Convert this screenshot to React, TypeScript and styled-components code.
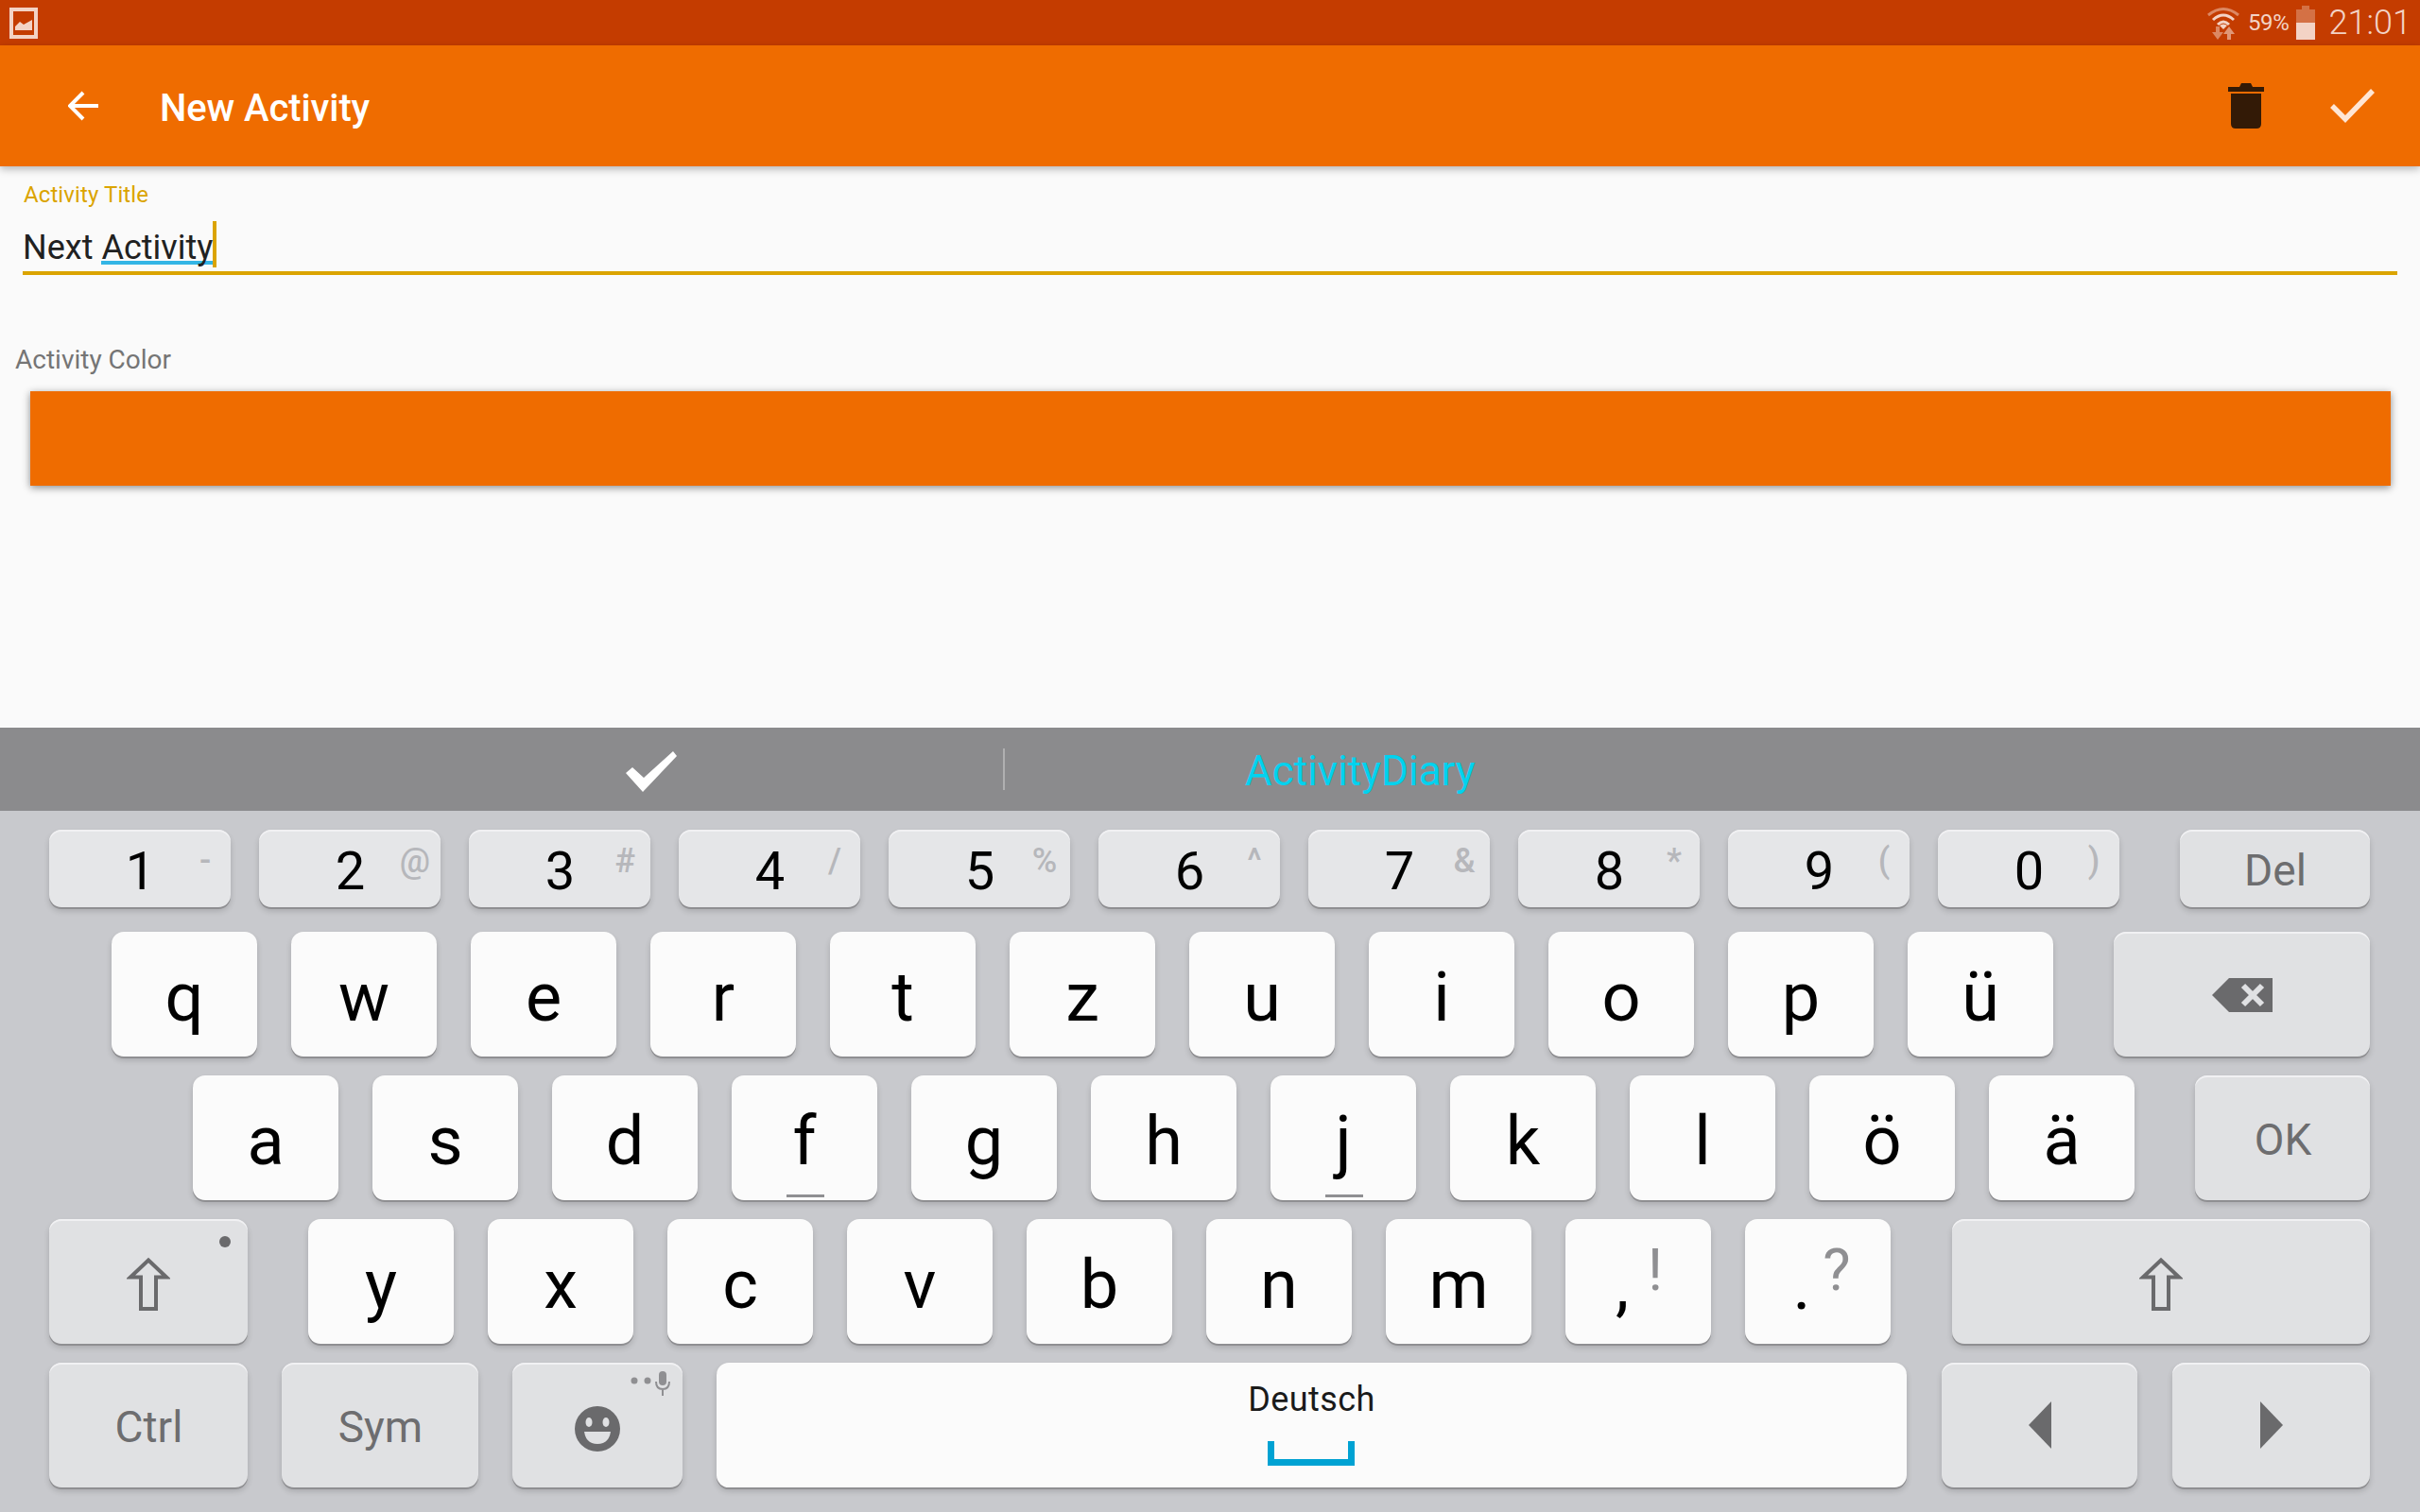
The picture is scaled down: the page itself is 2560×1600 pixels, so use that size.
import React from "react";
import styled, { createGlobalStyle } from "styled-components";

const Global = createGlobalStyle`
  html, body { margin: 0; padding: 0; background: #fafafa; }
  * { box-sizing: border-box; }
`;

const Page = styled.div`
  width: 2560px;
  height: 1600px;
  display: flex;
  flex-direction: column;
  overflow: hidden;
  font-family: Roboto, "Liberation Sans", sans-serif;
  background: #fafafa;
`;

const StatusBar = styled.div`
  height: 48px;
  flex: none;
  background: #c43c00;
  display: flex;
  align-items: center;
  padding: 0 9px 0 10px;
`;
const StatusLeft = styled.div`
  flex: 1;
  display: flex;
  align-items: center;
`;
const Percent = styled.span`
  font-size: 24px;
  color: #f3d3c5;
  margin-left: 9px;
  margin-right: 7px;
  letter-spacing: -0.3px;
`;
const Clock = styled.span`
  font-size: 36px;
  font-weight: 300;
  color: #f3d3c5;
  margin-left: 15px;
`;

const Toolbar = styled.div`
  height: 128px;
  flex: none;
  background: #ef6c00;
  display: flex;
  align-items: center;
  padding: 0 48px 0 72px;
  box-shadow: 0 3px 8px rgba(0, 0, 0, 0.28);
  position: relative;
  z-index: 2;
`;
const Title = styled.div`
  flex: 1;
  margin-left: 65px;
  font-size: 40px;
  font-weight: 500;
  letter-spacing: -0.1px;
  color: #fff;
  padding-top: 4px;
`;
const ToolIcon = styled.svg<{ $mr?: number }>`
  display: block;
  flex: none;
  margin-right: ${(p) => p.$mr ?? 0}px;
`;

const Content = styled.div`
  flex: 1;
  display: flex;
  flex-direction: column;
  padding: 16px 24px 0 24px;
  background: #fafafa;
`;
const FloatLabel = styled.div`
  font-size: 24px;
  line-height: 28px;
  letter-spacing: 0.1px;
  color: #dba400;
  margin-left: 1px;
`;
const InputRow = styled.div`
  height: 71px;
  border-bottom: 4px solid #dba400;
  font-size: 36px;
  line-height: 42px;
  color: #212121;
  padding: 21px 0 0 0;
  display: flex;
`;
const ComposingWord = styled.span`
  position: relative;
  margin-left: 9px;
  &::after {
    content: "";
    position: absolute;
    left: 0;
    right: 0;
    top: 35px;
    height: 4px;
    background: #33b5e5;
    z-index: 0;
  }
`;
const WordText = styled.span`
  position: relative;
  z-index: 1;
`;
const Caret = styled.span`
  display: block;
  width: 4px;
  height: 49px;
  margin-top: -7px;
  background: #dba400;
`;
const ColorLabel = styled.div`
  font-size: 28px;
  line-height: 32px;
  color: #757575;
  margin: 74px 0 0 -8px;
`;
const ColorSwatch = styled.div`
  height: 100px;
  margin: 17px 7px 0 8px;
  background: #ef6c00;
  box-shadow: 0 2px 8px rgba(0, 0, 0, 0.45);
`;

const Strip = styled.div`
  height: 88px;
  flex: none;
  background: #8b8b8d;
  display: flex;
  align-items: center;
`;
const StripLeft = styled.div`
  width: 1063px;
  height: 44px;
  padding-left: 662px;
  display: flex;
  align-items: center;
  border-right: 2px solid #b0b0b1;
`;
const StripCheck = styled.svg`
  display: block;
  margin-top: 5px;
`;
const Suggestion = styled.div`
  margin-left: 254px;
  padding-top: 4px;
  font-size: 44px;
  color: #00d2ef;
`;

const Keyboard = styled.div`
  height: 742px;
  flex: none;
  background: #c8c9cd;
  padding: 20px 53px 0 52px;
  display: flex;
  flex-direction: column;
`;
const KeyRow = styled.div<{ $indent?: number; $h: number; $top?: number }>`
  display: flex;
  height: ${(p) => p.$h}px;
  margin-top: ${(p) => p.$top ?? 20}px;
  padding-left: ${(p) => p.$indent ?? 0}px;
  &:first-child { margin-top: 0; }
`;
const Key = styled.div<{ $w: number; $gap?: number; $fn?: boolean; $num?: boolean }>`
  position: relative;
  flex: none;
  width: ${(p) => p.$w}px;
  margin-right: ${(p) => p.$gap ?? 36}px;
  height: 100%;
  border-radius: 13px;
  background: ${(p) => (p.$num ? "#e5e6e8" : p.$fn ? "#e0e1e3" : "#fbfbfb")};
  box-shadow: 0 2px 0 #8f8f92, 0 4px 6px rgba(0, 0, 0, 0.16)
    ${(p) => (p.$fn || p.$num ? ", inset 0 2px 0 #f1f1f3" : "")};
  display: flex;
  align-items: center;
  justify-content: center;
  &:last-child { margin-right: 0; }
`;
const Letter = styled.span`
  font-size: 72px;
  line-height: 72px;
  color: #000;
  padding-top: 7px;
`;
const Digit = styled.span`
  font-size: 56px;
  line-height: 56px;
  color: #000;
  padding: 6px 0 0 1px;
`;
const Hint = styled.span`
  position: absolute;
  left: 165px;
  top: 11px;
  width: 0;
  display: flex;
  justify-content: center;
  font-size: 36px;
  font-weight: 500;
  line-height: 44px;
  color: #b6b7bb;
`;
const FnLabel = styled.span`
  font-size: 46px;
  line-height: 50px;
  color: #6d6d6f;
  padding: 3px 0 0 1px;
`;
const Underscore = styled.span`
  position: absolute;
  left: 58px;
  bottom: 3px;
  width: 40px;
  height: 3px;
  background: #8f8f92;
`;
const PunctMain = styled.span<{ $x: number }>`
  position: absolute;
  left: ${(p) => p.$x}px;
  top: 26px;
  width: 0;
  display: flex;
  justify-content: center;
  font-size: 72px;
  line-height: 90px;
  color: #000;
`;
const PunctAlt = styled.span<{ $x: number }>`
  position: absolute;
  left: ${(p) => p.$x}px;
  top: 18px;
  width: 0;
  display: flex;
  justify-content: center;
  font-size: 62px;
  line-height: 72px;
  color: #8f8f92;
`;
const ShiftDot = styled.span`
  position: absolute;
  right: 18px;
  top: 18px;
  width: 12px;
  height: 12px;
  border-radius: 50%;
  background: #6a6a6c;
`;
const ShiftGlyph = styled.svg`
  display: block;
  margin-top: 4px;
`;
const BackGlyph = styled.svg`
  display: block;
  margin-top: 2px;
`;
const Smiley = styled.svg`
  display: block;
  margin-top: 8px;
`;
const MicBadge = styled.svg`
  position: absolute;
  right: 9px;
  top: 9px;
  display: block;
`;
const SpaceInner = styled.div`
  display: flex;
  flex-direction: column;
  align-items: center;
  padding-bottom: 5px;
`;
const SpaceLabel = styled.span`
  font-size: 36px;
  line-height: 42px;
  color: #1a1a1a;
  letter-spacing: 0.4px;
`;
const SpaceBracket = styled.span`
  display: block;
  width: 92px;
  height: 26px;
  margin-top: 23px;
  border: 7px solid #00a2d3;
  border-top: 0;
`;

const ShiftIcon = () => (
  <ShiftGlyph width="46" height="57" viewBox="0 0 46 57">
    <path d="M23 3.5 L42 21.5 H31 V55 H15 V21.5 H4 Z" fill="none" stroke="#6a6a6c" strokeWidth="4" />
  </ShiftGlyph>
);

const row2 = ["q", "w", "e", "r", "t", "z", "u", "i", "o", "p", "ü"];
const row3 = ["a", "s", "d", "f", "g", "h", "j", "k", "l", "ö", "ä"];
const row4 = ["y", "x", "c", "v", "b", "n", "m"];
const nums: [string, string][] = [
  ["1", "-"], ["2", "@"], ["3", "#"], ["4", "/"], ["5", "%"],
  ["6", "^"], ["7", "&"], ["8", "*"], ["9", "("], ["0", ")"],
];

export default function App() {
  return (
    <Page>
      <Global />
      <StatusBar>
        <StatusLeft>
          <svg width="30" height="33" viewBox="0 0 30 33">
            <path fillRule="evenodd" d="M0 0H30V33H0Z M4 4V29H26V4Z" fill="#f3d3c5" />
            <path d="M6 24 V20 L11 15 L15 18 L24 13 V24 Z" fill="#f3d3c5" />
          </svg>
        </StatusLeft>
        <svg width="34" height="36" viewBox="0 0 34 36">
          <g fill="none" stroke="#f3d3c5" strokeWidth="3">
            <path d="M1 10 Q17 -3 33 10" opacity="0.5" />
            <path d="M6 15 Q17 5 28 15" />
            <path d="M11 20 Q17 14 23 20" />
          </g>
          <path d="M17 25 L13 21 Q17 18 21 21 Z" fill="#f3d3c5" />
          <path d="M11 36 L5 28 H9 V22 H13 V28 H17 Z" fill="#f3d3c5" opacity="0.5" />
          <path d="M23 22 L29 30 H25 V36 H21 V30 H17 Z" fill="#f3d3c5" opacity="0.6" />
        </svg>
        <Percent>59%</Percent>
        <svg width="20" height="36" viewBox="0 0 20 36">
          <path d="M6 0H14V4H20V18H0V4H6Z" fill="#f3d3c5" opacity="0.35" />
          <rect y="18" width="20" height="18" fill="#f3d3c5" />
        </svg>
        <Clock>21:01</Clock>
      </StatusBar>

      <Toolbar>
        <svg width="32" height="32" viewBox="0 0 32 32">
          <path d="M32 16H3M16 2 2 16 16 30" fill="none" stroke="#fff" strokeWidth="4" />
        </svg>
        <Title>New Activity</Title>
        <ToolIcon $mr={70} width="38" height="48" viewBox="0 0 38 48">
          <path d="M0 4H12L14 0H24L26 4H38V9H0ZM3 11H35V43Q35 48 30 48H8Q3 48 3 43Z" fill="#331a06" />
        </ToolIcon>
        <ToolIcon width="47" height="36" viewBox="0 0 47 36">
          <path d="M2 18 16 32 45 2" fill="none" stroke="#ffe6d4" strokeWidth="5.5" />
        </ToolIcon>
      </Toolbar>

      <Content>
        <FloatLabel>Activity Title</FloatLabel>
        <InputRow>
          <span>Next</span>
          <ComposingWord><WordText>Activity</WordText></ComposingWord>
          <Caret />
        </InputRow>
        <ColorLabel>Activity Color</ColorLabel>
        <ColorSwatch />
      </Content>

      <Strip>
        <StripLeft>
          <StripCheck width="54" height="43" viewBox="0 0 54 43">
            <path d="M0 23 L7 17 L19 28 L50 0 L54 5 L18 43 Z" fill="#fff" />
          </StripCheck>
        </StripLeft>
        <Suggestion>ActivityDiary</Suggestion>
      </Strip>

      <Keyboard>
        <KeyRow $h={82}>
          {nums.map(([d, h], i) => (
            <Key key={d} $w={192} $gap={i === 9 ? 64 : 30} $num>
              <Digit>{d}</Digit>
              <Hint>{h}</Hint>
            </Key>
          ))}
          <Key $w={201} $fn><FnLabel>Del</FnLabel></Key>
        </KeyRow>

        <KeyRow $h={132} $top={26} $indent={66}>
          {row2.map((c, i) => (
            <Key key={c} $w={154} $gap={i === 10 ? 64 : 36}><Letter>{c}</Letter></Key>
          ))}
          <Key $w={271} $fn>
            <BackGlyph width="64" height="36" viewBox="0 0 64 36">
              <path d="M18 0H64V36H18L0 18Z" fill="#6a6a6c" />
              <path d="M33 8 53 28M53 8 33 28" stroke="#e0e1e3" strokeWidth="6" />
            </BackGlyph>
          </Key>
        </KeyRow>

        <KeyRow $h={132} $indent={152}>
          {row3.map((c, i) => (
            <Key key={c} $w={154} $gap={i === 10 ? 64 : 36}>
              <Letter>{c}</Letter>
              {(c === "f" || c === "j") && <Underscore />}
            </Key>
          ))}
          <Key $w={185} $fn><FnLabel>OK</FnLabel></Key>
        </KeyRow>

        <KeyRow $h={132}>
          <Key $w={210} $gap={64} $fn>
            <ShiftIcon />
            <ShiftDot />
          </Key>
          {row4.map((c) => (
            <Key key={c} $w={154}><Letter>{c}</Letter></Key>
          ))}
          <Key $w={154}>
            <PunctMain $x={60}>,</PunctMain>
            <PunctAlt $x={95}>!</PunctAlt>
          </Key>
          <Key $w={154} $gap={65}>
            <PunctMain $x={60}>.</PunctMain>
            <PunctAlt $x={97}>?</PunctAlt>
          </Key>
          <Key $w={442} $fn><ShiftIcon /></Key>
        </KeyRow>

        <KeyRow $h={132}>
          <Key $w={210} $fn><FnLabel>Ctrl</FnLabel></Key>
          <Key $w={208} $fn><FnLabel>Sym</FnLabel></Key>
          <Key $w={180} $fn>
            <Smiley width="48" height="48" viewBox="0 0 48 48">
              <circle cx="24" cy="24" r="24" fill="#6a6a6c" />
              <ellipse cx="15" cy="17" rx="3.5" ry="5" fill="#e0e1e3" />
              <ellipse cx="33" cy="17" rx="3.5" ry="5" fill="#e0e1e3" />
              <path d="M10 27H38Q36 40 24 40T10 27Z" fill="#e0e1e3" />
            </Smiley>
            <MicBadge width="46" height="26" viewBox="0 0 46 26">
              <circle cx="4" cy="10" r="3.5" fill="#8f8f92" />
              <circle cx="18" cy="10" r="3.5" fill="#8f8f92" />
              <rect x="30" y="0" width="8" height="15" rx="4" fill="#8f8f92" />
              <path d="M27 11Q27 19 34 19T41 11M34 19V26" fill="none" stroke="#8f8f92" strokeWidth="2" />
            </MicBadge>
          </Key>
          <Key $w={1259} $gap={37}>
            <SpaceInner>
              <SpaceLabel>Deutsch</SpaceLabel>
              <SpaceBracket />
            </SpaceInner>
          </Key>
          <Key $w={207} $gap={37} $fn>
            <svg width="24" height="50" viewBox="0 0 24 50"><path d="M24 0V50L0 25Z" fill="#6a6a6c" /></svg>
          </Key>
          <Key $w={209} $fn>
            <svg width="24" height="50" viewBox="0 0 24 50"><path d="M0 0V50L24 25Z" fill="#6a6a6c" /></svg>
          </Key>
        </KeyRow>
      </Keyboard>
    </Page>
  );
}
